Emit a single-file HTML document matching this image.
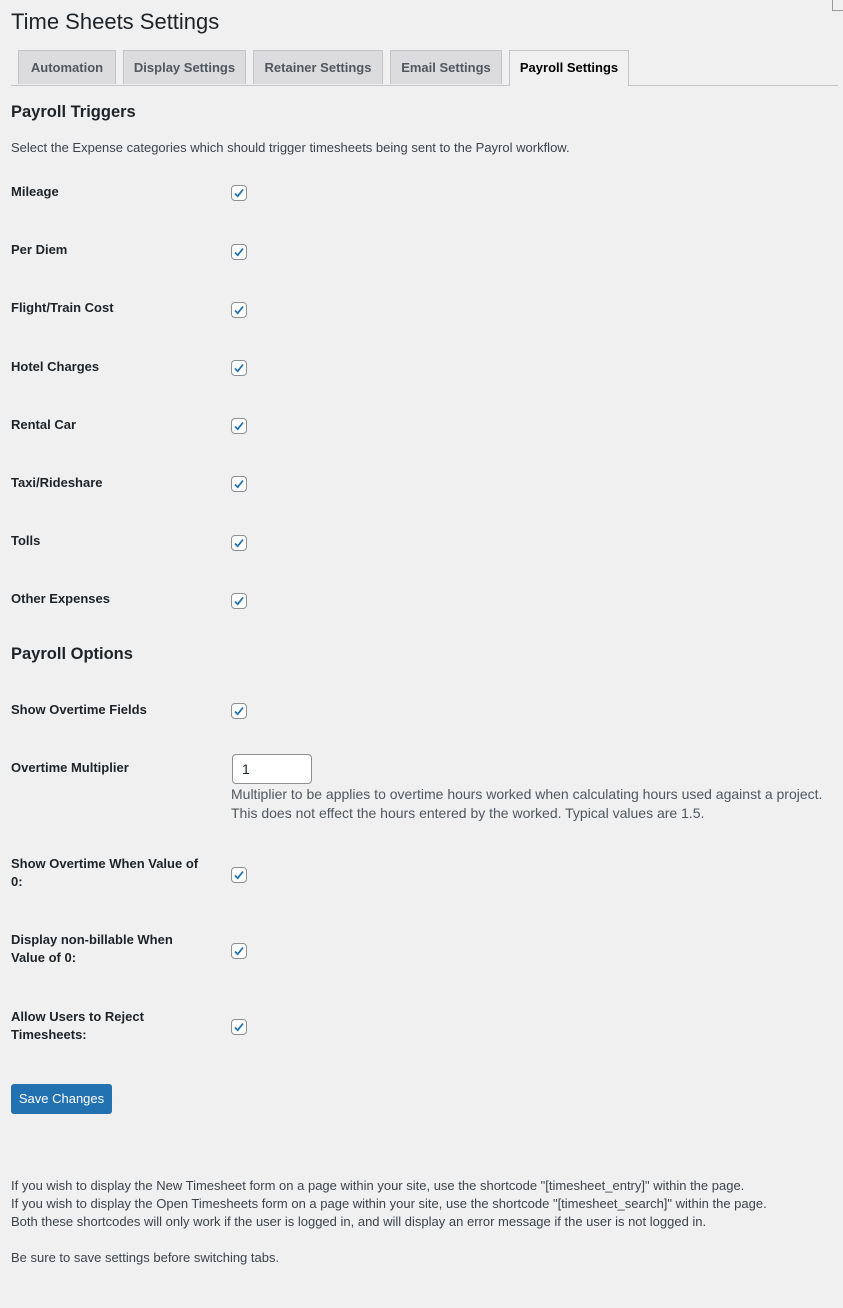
<!DOCTYPE html>
<html><head><meta charset="utf-8"><style>
body{margin:0;width:843px;height:1308px;background:#f0f0f1;font-family:"Liberation Sans",sans-serif;color:#1d2327;position:relative;overflow:hidden}
.a{position:absolute;white-space:nowrap}
h1{position:absolute;left:11px;top:9px;margin:0;font-weight:400;font-size:22px;color:#1d2327}
.tab{position:absolute;top:50px;height:34px;border:1px solid #c3c4c7;border-bottom:none;background:#dcdcde;font-size:13px;font-weight:600;color:#50575e;line-height:34px;text-align:center;box-sizing:border-box}
.tab.on{background:#f0f0f1;color:#000;height:36px}
.line{position:absolute;left:11px;top:85px;width:827px;height:1px;background:#c3c4c7}
h2{position:absolute;left:11px;margin:0;font-size:16.5px;font-weight:600}
.lbl{position:absolute;left:11px;font-size:13px;font-weight:600;line-height:18px;width:196px}
.cb{position:absolute;left:231px;width:16px;height:16px;border:1px solid #8c8f94;border-radius:4px;background:#fff;box-sizing:border-box}
.cb svg{position:absolute;left:1px;top:1px}
.s{font-size:13px;color:#3c434a}
</style></head><body>
<h1>Time Sheets Settings</h1>
<div class="a" style="left:832px;top:0;width:10px;height:10px;border-left:1px solid #999;border-bottom:1px solid #999"></div>
<div class="tab" style="left:18px;width:98px">Automation</div>
<div class="tab" style="left:123px;width:123px">Display Settings</div>
<div class="tab" style="left:253px;width:130px">Retainer Settings</div>
<div class="tab" style="left:390px;width:112px">Email Settings</div>
<div class="line"></div>
<div class="tab on" style="left:509px;width:120px">Payroll Settings</div>
<h2 style="top:103px">Payroll Triggers</h2>
<div class="a s" style="left:11px;top:140px">Select the Expense categories which should trigger timesheets being sent to the Payrol workflow.</div>

<div class="lbl" style="top:183px">Mileage</div><div class="cb" style="top:185px"><svg width="12" height="12" viewBox="0 0 12 12"><path d="M2 6.5l2.7 2.7L10 2.5" stroke="#2271b1" stroke-width="1.8" fill="none"/></svg></div>
<div class="lbl" style="top:241px">Per Diem</div><div class="cb" style="top:244px"><svg width="12" height="12" viewBox="0 0 12 12"><path d="M2 6.5l2.7 2.7L10 2.5" stroke="#2271b1" stroke-width="1.8" fill="none"/></svg></div>
<div class="lbl" style="top:299px">Flight/Train Cost</div><div class="cb" style="top:302px"><svg width="12" height="12" viewBox="0 0 12 12"><path d="M2 6.5l2.7 2.7L10 2.5" stroke="#2271b1" stroke-width="1.8" fill="none"/></svg></div>
<div class="lbl" style="top:358px">Hotel Charges</div><div class="cb" style="top:360px"><svg width="12" height="12" viewBox="0 0 12 12"><path d="M2 6.5l2.7 2.7L10 2.5" stroke="#2271b1" stroke-width="1.8" fill="none"/></svg></div>
<div class="lbl" style="top:416px">Rental Car</div><div class="cb" style="top:418px"><svg width="12" height="12" viewBox="0 0 12 12"><path d="M2 6.5l2.7 2.7L10 2.5" stroke="#2271b1" stroke-width="1.8" fill="none"/></svg></div>
<div class="lbl" style="top:474px">Taxi/Rideshare</div><div class="cb" style="top:476px"><svg width="12" height="12" viewBox="0 0 12 12"><path d="M2 6.5l2.7 2.7L10 2.5" stroke="#2271b1" stroke-width="1.8" fill="none"/></svg></div>
<div class="lbl" style="top:532px">Tolls</div><div class="cb" style="top:535px"><svg width="12" height="12" viewBox="0 0 12 12"><path d="M2 6.5l2.7 2.7L10 2.5" stroke="#2271b1" stroke-width="1.8" fill="none"/></svg></div>
<div class="lbl" style="top:590px">Other Expenses</div><div class="cb" style="top:593px"><svg width="12" height="12" viewBox="0 0 12 12"><path d="M2 6.5l2.7 2.7L10 2.5" stroke="#2271b1" stroke-width="1.8" fill="none"/></svg></div>

<h2 style="top:645px">Payroll Options</h2>
<div class="lbl" style="top:701px">Show Overtime Fields</div><div class="cb" style="top:703px"><svg width="12" height="12" viewBox="0 0 12 12"><path d="M2 6.5l2.7 2.7L10 2.5" stroke="#2271b1" stroke-width="1.8" fill="none"/></svg></div>
<div class="lbl" style="top:759px">Overtime Multiplier</div>
<div class="a" style="left:232px;top:754px;width:80px;height:30px;border:1px solid #8c8f94;border-radius:4px;background:#fff;box-sizing:border-box;font-size:14px;line-height:28px;padding-left:9px">1</div>
<div class="a" style="left:231px;top:785px;font-size:14px;line-height:19px;color:#50575e">Multiplier to be applies to overtime hours worked when calculating hours used against a project.<br>This does not effect the hours entered by the worked. Typical values are 1.5.</div>
<div class="lbl" style="top:855px">Show Overtime When Value of 0:</div><div class="cb" style="top:867px"><svg width="12" height="12" viewBox="0 0 12 12"><path d="M2 6.5l2.7 2.7L10 2.5" stroke="#2271b1" stroke-width="1.8" fill="none"/></svg></div>
<div class="lbl" style="top:931px">Display non-billable When<br>Value of 0:</div><div class="cb" style="top:943px"><svg width="12" height="12" viewBox="0 0 12 12"><path d="M2 6.5l2.7 2.7L10 2.5" stroke="#2271b1" stroke-width="1.8" fill="none"/></svg></div>
<div class="lbl" style="top:1008px">Allow Users to Reject<br>Timesheets:</div><div class="cb" style="top:1019px"><svg width="12" height="12" viewBox="0 0 12 12"><path d="M2 6.5l2.7 2.7L10 2.5" stroke="#2271b1" stroke-width="1.8" fill="none"/></svg></div>

<div class="a" style="left:11px;top:1084px;width:101px;height:30px;background:#2271b1;border-radius:3px;color:#fff;font-size:13px;line-height:30px;text-align:center">Save Changes</div>

<div class="a s" style="left:11px;top:1177px;line-height:18px">If you wish to display the New Timesheet form on a page within your site, use the shortcode "[timesheet_entry]" within the page.<br>If you wish to display the Open Timesheets form on a page within your site, use the shortcode "[timesheet_search]" within the page.<br>Both these shortcodes will only work if the user is logged in, and will display an error message if the user is not logged in.</div>
<div class="a s" style="left:11px;top:1250px">Be sure to save settings before switching tabs.</div>
</body></html>
